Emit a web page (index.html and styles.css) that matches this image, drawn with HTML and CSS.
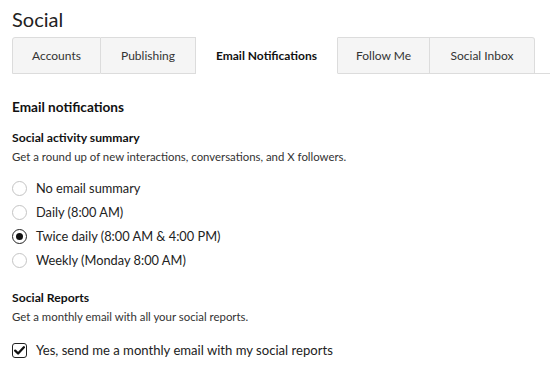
FILE: index.html
```html
<!DOCTYPE html>
<html lang="en">
<head>
  <meta charset="UTF-8" />
  <title>Social</title>
  <link rel="stylesheet" href="styles.css">
</head>
<body>

<h1 class="page-title">Social</h1>

<div class="tabs">
  <div class="tab">Accounts</div>
  <div class="tab">Publishing</div>
  <div class="tab active">Email Notifications</div>
  <div class="tab">Follow Me</div>
  <div class="tab">Social Inbox</div>
  <div class="tab-fill"></div>
</div>

<div class="content">
  <h2>Email notifications</h2>

  <h3>Social activity summary</h3>
  <p class="desc">Get a round up of new interactions, conversations, and X followers.</p>

  <div class="options">
    <label class="option"><span class="radio"></span>No email summary</label>
    <label class="option"><span class="radio"></span>Daily (8:00 AM)</label>
    <label class="option"><span class="radio checked"></span>Twice daily (8:00 AM &amp; 4:00 PM)</label>
    <label class="option"><span class="radio"></span>Weekly (Monday 8:00 AM)</label>
  </div>

  <h3>Social Reports</h3>
  <p class="desc">Get a monthly email with all your social reports.</p>

  <label class="option check-option">
    <span class="checkbox">
      <svg width="11" height="9" viewBox="0 0 11 9"><path d="M1.2 4.6l2.9 2.9 5.8-6.2" fill="none" stroke="#111" stroke-width="2.3" stroke-linecap="round" stroke-linejoin="round"/></svg>
    </span>
    Yes, send me a monthly email with my social reports
  </label>
</div>

</body>
</html>
```

FILE: styles.css
```css
* { margin: 0; padding: 0; box-sizing: border-box; }

body {
  font-family: 'Lato', sans-serif;
  color: #222;
  background: #fff;
  padding: 6px 0 0 12px;
}

.page-title {
  font-size: 20px;
  font-weight: 400;
  line-height: 26px;
  color: #222;
  margin-bottom: 5px;
}

.tabs {
  display: flex;
  height: 37px;
}

.tab {
  width: 88px;
  background: #f5f5f5;
  border: 1px solid #dcdcdc;
  border-left: none;
  display: flex;
  align-items: center;
  justify-content: center;
  font-size: 12px;
  color: #333;
}

.tab:nth-child(1) { border-left: 1px solid #dcdcdc; border-top-left-radius: 3px; width: 89px; }
.tab:nth-child(2) { width: 95px; }
.tab:nth-child(3) { width: 142px; }
.tab:nth-child(4) { width: 92px; }
.tab:nth-child(5) { width: 105px; border-top-right-radius: 3px; }

.tab.active {
  background: #fff;
  border-bottom-color: #fff;
  border-top-color: #fff;
  font-weight: 700;
  font-size: 12px;
  color: #111;
}

.tab-fill {
  flex: 1;
  border-bottom: 1px solid #dcdcdc;
}

.content {
  padding-top: 24px;
}

h2 {
  font-size: 13.6px;
  font-weight: 700;
  line-height: 18px;
  color: #111;
  margin-bottom: 14px;
}

h3 {
  font-size: 12.2px;
  font-weight: 700;
  line-height: 16px;
  color: #111;
  margin-bottom: 3px;
}

.desc {
  font-size: 11.4px;
  line-height: 16px;
  color: #333;
  margin-bottom: 14px;
}

.options {
  display: flex;
  flex-direction: column;
  gap: 6px;
  margin-bottom: 21px;
}

.option {
  display: flex;
  align-items: center;
  gap: 9px;
  font-size: 12.8px;
  line-height: 18px;
  color: #222;
}

.radio {
  width: 15px;
  height: 15px;
  border: 1px solid #c4c4c4;
  border-radius: 50%;
  display: flex;
  align-items: center;
  justify-content: center;
}

.radio.checked {
  border: 1.5px solid #222;
}

.radio.checked::after {
  content: "";
  width: 7px;
  height: 7px;
  border-radius: 50%;
  background: #111;
}

.check-option {
  margin-top: 16px;
  font-size: 13.1px;
}

.checkbox {
  width: 15px;
  height: 15px;
  border: 1.5px solid #222;
  border-radius: 3px;
  display: flex;
  align-items: center;
  justify-content: center;
}
```
